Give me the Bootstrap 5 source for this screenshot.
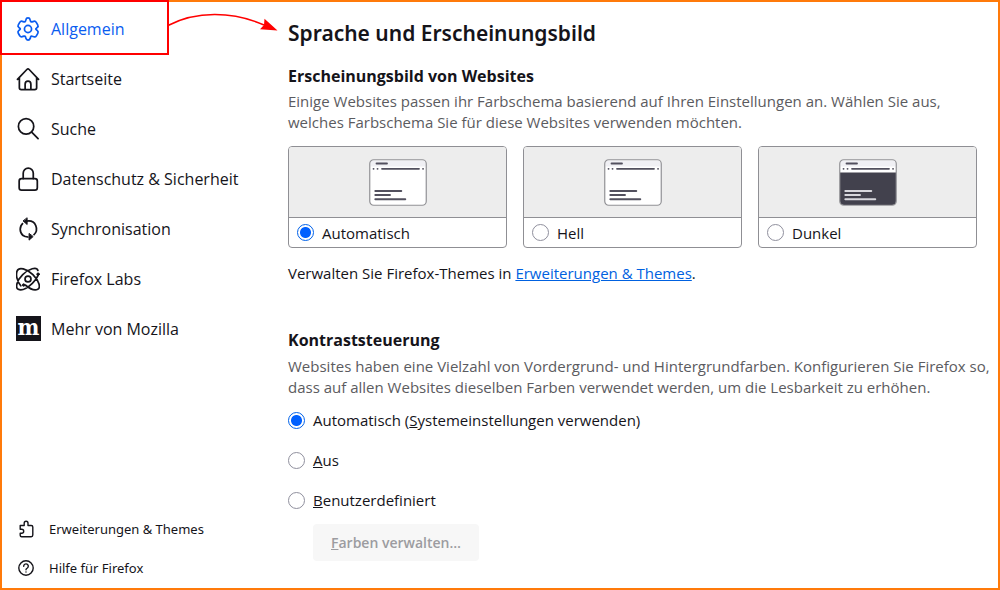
<!DOCTYPE html>
<html lang="de">
<head>
<meta charset="utf-8">
<meta name="viewport" content="width=device-width, initial-scale=1">
<title>Einstellungen</title>
<link href="https://cdn.jsdelivr.net/npm/bootstrap@5.3.0/dist/css/bootstrap.min.css" rel="stylesheet">
<style>
  body { font-family: "Open Sans", "Noto Sans", sans-serif; font-size: 15px; line-height: 22px; color: #15141a; background: #fff; }
  .frame { border: 2px solid #ff7a0a; }
  .sidebar { flex: 0 0 286px; padding: 2px 0 0 14px; }
  .sidebar .nav-link { display: flex; align-items: center; gap: 11px; height: 50px; padding: 0 0 1px; font-size: 16px; color: #15141a; }
  .sidebar .nav-link.active { color: #0a5cf0; }
  .sidebar svg { width: 24px; height: 24px; fill: none; stroke: currentColor; stroke-width: 1.8; stroke-linecap: round; stroke-linejoin: round; flex: none; }
  .sidebar .foot .nav-link { height: 39px; font-family: "Noto Sans", sans-serif; font-size: 13px; gap: 14px; padding-left: 1px; }
  .sidebar .foot svg { width: 18px; height: 18px; stroke-width: 1.4; }
  .moz { width: 25px; height: 25px; margin-right: -1px; flex: none; background: #15141a; color: #fff; font: bold 23px/21px "DejaVu Serif Condensed", "DejaVu Serif", serif; display: flex; justify-content: center; }
  .content { padding: 16px 8px 27px 0; }
  h1 { font-family: "Noto Sans", sans-serif; font-size: 21px; line-height: 30px; font-weight: 600; margin-bottom: 17px; }
  h2 { font-size: 16px; line-height: 22px; font-weight: 700; margin-bottom: 4px; }
  .hint { color: #5b5b60; line-height: 21px; }
  .themes { padding-right: 13px; margin: 13px 0 14px; }
  .theme { border: 1px solid #8f8f94; border-radius: 4px; overflow: hidden; cursor: pointer; }
  .shot { height: 71px; background: #ededed; border-bottom: 1px solid #8f8f94; }
  .pick { height: 29px; padding: 0 8px; }
  .rad { appearance: none; width: 17px; height: 17px; margin: 0; border: 1px solid #8f8f9d; border-radius: 50%; background: #fff; flex: none; }
  .rad:checked { border-color: #0061e9; background: radial-gradient(circle, #0060ff 0 5px, #fff 6px); }
  .opt { height: 24px; gap: 8px; }
  .choices { margin-top: 10px; }
  .manage { height: 37px; margin: 12px 0 0 25px; padding: 0 18px; border: 0; border-radius: 4px; font-size: 14px; font-weight: 600; }
  .manage:disabled { opacity: 1; background: #f7f7f7; color: #9c9ca0; }
  .link { color: #0061e0; }
  .contrast { margin-top: 45px; }
  .contrast h2 { margin-bottom: 5px; }
  .marker { width: 169px; height: 55px; border: 2px solid #f00; pointer-events: none; }
  .arrow { left: 166px; pointer-events: none; }
</style>
</head>
<body>
<svg class="d-none">
  <symbol id="win" viewBox="0 0 58 47">
    <rect x=".75" y=".75" width="56.5" height="45.5" rx="4" fill="#fff"/>
    <path d="M1.500 7.500V4.500a3 3 0 0 1 3-3h49a3 3 0 0 1 3 3v3z" fill="#f0f0f4"/>
    <path d="M1 13.500h56V42a4 4 0 0 1-4 4H5a4 4 0 0 1-4-4z" fill="var(--pane)"/>
    <g stroke="#52505e" stroke-width="1.800" stroke-linecap="round"><path d="M7.500 4.500h10.500M13 9.800h37"/><path d="M4.500 9.800h.1M8.500 9.800h.1M54 9.800h.1"/></g>
    <path d="M6.300 32h26M6.300 36h14.700M6.300 40.300h30" stroke="var(--ink)" stroke-width="1.900" stroke-linecap="round"/>
    <rect x=".75" y=".75" width="56.500" height="45.500" rx="4" fill="none" stroke="#919195" stroke-width="1.200"/>
  </symbol>
</svg>
<div class="frame d-flex min-vh-100">
  <nav class="sidebar d-flex flex-column justify-content-between" aria-label="Einstellungen">
    <div class="nav flex-column">
      <a class="nav-link active" href="#allgemein"><svg viewBox="0 0 25 25"><path d="M10.300 2.800Q10.700 1 12.500 1t2.200 1.800l.4 1.500q.4 1 1.500.7l1.900-.5q1.700-.4 2.600 1.100l1.500 2.600q.9 1.600-.4 2.700l-1.100 1q-.9.600 0 1.300l1.200 1.100q1.300 1.200.4 2.700l-1.500 2.600q-.9 1.500-2.600 1l-1.900-.6q-1-.3-1.500.8l-.4 1.500Q14.200 24 12.500 24t-2.200-1.800l-.4-1.500q-.4-1-1.500-.8l-1.900.6q-1.700.4-2.600-1l-1.500-2.600q-.9-1.500.4-2.700L4 13.100q.9-.7 0-1.300l-1.100-1Q1.500 9.700 2.400 8.200l1.500-2.600Q4.800 4.100 6.500 4.500l1.900.5q1 .3 1.500-.7z"/><circle cx="12.500" cy="12.500" r="3.700"/></svg>Allgemein</a>
      <a class="nav-link" href="#startseite"><svg viewBox="0 0 25 25"><path d="M1.500 12.800 11.300 2.600q1.200-1.200 2.400 0l9.800 10.200M3.500 11v10.500q0 2 2 2h14q2 0 2-2V11M9.500 23.500V18q0-3.200 3-3.200t3 3.200v5.500"/></svg>Startseite</a>
      <a class="nav-link" href="#suche"><svg viewBox="0 0 25 25"><circle cx="10.500" cy="9.800" r="8"/><path d="m16.300 15.700 6.700 6.800"/></svg>Suche</a>
      <a class="nav-link" href="#datenschutz"><svg viewBox="0 0 25 25"><rect x="3.300" y="12" width="18.900" height="12" rx="2.500"/><path d="M7.500 12V6.500a5.250 5.250 0 0 1 10.500 0V12"/></svg>Datenschutz &amp; Sicherheit</a>
      <a class="nav-link" href="#sync"><svg viewBox="0 0 25 25"><path d="M7.300 19.300A8.700 8.700 0 0 1 7.300 6.300M11.500 4.300C20.500 3 24.500 13 18.300 19M6.300 18.300Q9 21 13 21" stroke-linecap="butt"/><path d="M11.600 1.200v6.600L7.600 4.300zM13.600 17.500v6.600l4-3.500z" fill="currentColor" stroke-width="1"/></svg>Synchronisation</a>
      <a class="nav-link" href="#labs"><svg viewBox="0 0 25 25"><path d="M22.800 3.600C21.600-.6 13.400 1.700 7 8S-1 21.600 2.300 23.200c3.500 1.700 9.700-1.500 14.700-6.200 3-2.900 4.800-5.600 5.700-7.800M5 19.500C1.200 15-.6 8 1.200 4 3-.2 11 1.500 17.600 8s8.400 13.600 5.100 15.200c-3.200 1.600-8.500-.7-12.700-4.200"/><circle cx="12.500" cy="12.500" r="3.100"/><circle cx="23" cy="7.500" r="1.300" fill="currentColor" stroke-width="1"/><circle cx="8" cy="18.800" r="1.300" fill="currentColor" stroke-width="1"/></svg>Firefox Labs</a>
      <a class="nav-link" href="#mozilla"><span class="moz" aria-hidden="true">m</span>Mehr von Mozilla</a>
    </div>
    <div class="foot nav flex-column">
      <a class="nav-link" href="#erweiterungen"><svg viewBox="0 0 18 18"><path d="M3.200 5.500h4V3.200a1.900 1.900 0 0 1 3.800 0v2.300h3.200q1.600 0 1.600 1.600v8q0 1.600-1.600 1.600H4.700q-1.500 0-1.500-1.500v-2h1.500a1.800 1.800 0 0 0 0-4H3.200z"/></svg>Erweiterungen &amp; Themes</a>
      <a class="nav-link" href="#hilfe"><svg viewBox="0 0 18 18"><circle cx="9" cy="9" r="7.200"/><path d="M6.700 7.200a2.300 2.300 0 1 1 3.700 1.800Q9 9.800 9 10.700M9 13v.1"/></svg>Hilfe für Firefox</a>
    </div>
  </nav>

  <main class="content flex-grow-1">
    <h1>Sprache und Erscheinungsbild</h1>
    <section>
      <h2>Erscheinungsbild von Websites</h2>
      <p class="hint mb-0">Einige Websites passen ihr Farbschema basierend auf Ihren Einstellungen an. Wählen Sie aus, welches Farbschema Sie für diese Websites verwenden möchten.</p>
      <div class="themes d-flex gap-3">
        <label class="theme flex-fill w-100" for="auto">
          <span class="shot d-flex align-items-center justify-content-center"><svg width="58" height="47" style="--pane:#fff;--ink:#52505e"><use href="#win"/></svg></span>
          <span class="pick d-flex align-items-center gap-2"><input class="rad" type="radio" name="theme" id="auto" checked>Automatisch</span>
        </label>
        <label class="theme flex-fill w-100" for="hell">
          <span class="shot d-flex align-items-center justify-content-center"><svg width="58" height="47" style="--pane:#fff;--ink:#52505e"><use href="#win"/></svg></span>
          <span class="pick d-flex align-items-center gap-2"><input class="rad" type="radio" name="theme" id="hell">Hell</span>
        </label>
        <label class="theme flex-fill w-100" for="dunkel">
          <span class="shot d-flex align-items-center justify-content-center"><svg width="58" height="47" style="--pane:#42414d;--ink:#d8d8de"><use href="#win"/></svg></span>
          <span class="pick d-flex align-items-center gap-2"><input class="rad" type="radio" name="theme" id="dunkel">Dunkel</span>
        </label>
      </div>
      <p class="mb-0">Verwalten Sie Firefox-Themes in <a class="link" href="#themes">Erweiterungen &amp; Themes</a>.</p>
    </section>
    <section class="contrast">
      <h2>Kontraststeuerung</h2>
      <p class="hint mb-0">Websites haben eine Vielzahl von Vordergrund- und Hintergrundfarben. Konfigurieren Sie Firefox so, dass auf allen Websites dieselben Farben verwendet werden, um die Lesbarkeit zu erhöhen.</p>
      <div class="choices d-flex flex-column align-items-start gap-3">
        <label class="opt d-flex align-items-center" for="k1"><input class="rad" type="radio" name="kontrast" id="k1" checked><span>Automatisch (<u>S</u>ystemeinstellungen verwenden)</span></label>
        <label class="opt d-flex align-items-center" for="k2"><input class="rad" type="radio" name="kontrast" id="k2"><span><u>A</u>us</span></label>
        <label class="opt d-flex align-items-center" for="k3"><input class="rad" type="radio" name="kontrast" id="k3"><span><u>B</u>enutzerdefiniert</span></label>
      </div>
      <button class="btn manage" type="button" disabled><u>F</u>arben verwalten…</button>
    </section>
  </main>
</div>
<div class="marker position-absolute top-0 start-0"></div>
<svg class="arrow position-absolute top-0" width="114" height="40" viewBox="166 0 114 40" aria-hidden="true"><path d="M168 25.500C196 11 232 11 264 25" fill="none" stroke="#f00" stroke-width="1.500"/><path d="m264.500 18.800 13 11.700-17.500-1.200 4-4.200z" fill="#f00"/></svg>
<script src="https://cdn.jsdelivr.net/npm/bootstrap@5.3.0/dist/js/bootstrap.bundle.min.js"></script>
</body>
</html>
